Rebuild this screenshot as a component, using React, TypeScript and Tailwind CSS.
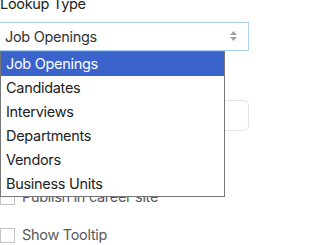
import React from 'react';

const options = ['Job Openings', 'Candidates', 'Interviews', 'Departments', 'Vendors', 'Business Units'];

const Checkbox: React.FC<{ label: string }> = ({ label }) => (
  <label className="flex items-center gap-[7px] h-[14px]">
    <span className="w-[15px] h-[15px] border border-[#c4c4c4] bg-white shrink-0" />
    <span className="text-[14.5px] leading-5 text-[#5a5a5a] tracking-[-0.3px]">{label}</span>
  </label>
);

export default function App() {
  return (
    <div className="relative w-[311px] h-[245px] overflow-hidden bg-white font-['Inter',sans-serif]">
      {/* form */}
      <div className="flex flex-col mt-[-6px]">
        <div className="text-[14.5px] leading-5 text-[#222] tracking-[-0.3px]">Lookup Type</div>

        <div className="mt-[8px] ml-[-1px] w-[250px] h-[29px] flex items-center justify-between pl-[5px] pr-[11px] border border-[#a6cff0] bg-white">
          <span className="text-[14.5px] text-[#333] tracking-[-0.3px]">Job Openings</span>
          <svg width="7" height="11" viewBox="0 0 7 11" className="text-[#a0a0a0]">
            <path d="M3.5 0 L7 4 L0 4 Z" fill="currentColor" />
            <path d="M0 6 L7 6 L3.5 10 Z" fill="currentColor" />
          </svg>
        </div>

        {/* second field, covered by the open list */}
        <div className="mt-[49px] w-[249px] h-[31px] border border-[#e3e3e3] rounded-[5px]" />

        <div className="mt-[59px]">
          <Checkbox label="Publish in career site" />
        </div>
        <div className="mt-[24px]">
          <Checkbox label="Show Tooltip" />
        </div>
      </div>

      {/* open dropdown */}
      <ul className="absolute left-0 top-[51px] w-[225px] border border-[#777] bg-white">
        {options.map((o, i) => (
          <li
            key={o}
            className={`h-6 flex items-center pl-[5px] text-[14.5px] tracking-[-0.3px] ${i === 0 ? 'bg-[#3a63cc] text-white' : 'text-[#222]'}`}
          >
            {o}
          </li>
        ))}
      </ul>
    </div>
  );
}
